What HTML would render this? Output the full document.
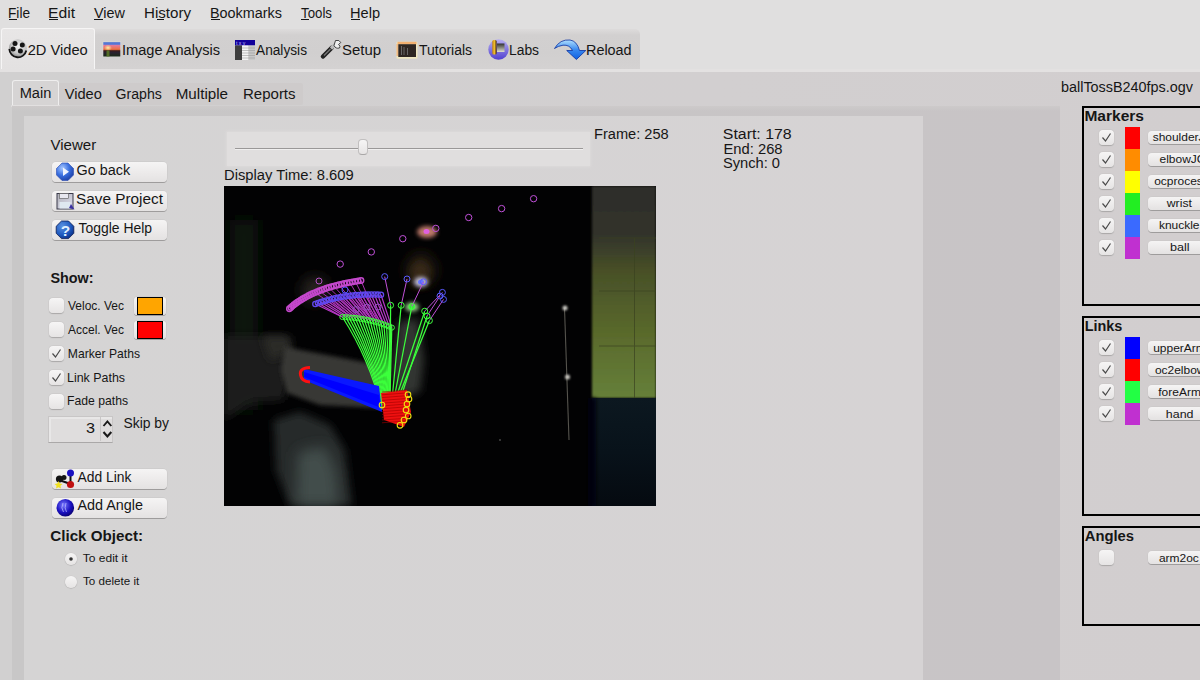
<!DOCTYPE html>
<html><head><meta charset="utf-8">
<style>
html,body{margin:0;padding:0;}
body{width:1200px;height:680px;overflow:hidden;position:relative;background:#d4d1d1;font-family:"Liberation Sans",sans-serif;}
.a{position:absolute;box-sizing:border-box;}
svg{position:absolute;left:0;top:0;}
svg text{font-family:"Liberation Sans",sans-serif;white-space:pre;}
</style></head><body>
<!-- menubar + toolbar background -->
<div class="a" style="left:0;top:0;width:1200px;height:72px;background:#e0dfdf"></div>
<div class="a" style="left:0;top:69px;width:1200px;height:3px;background:#e3e1e1"></div>
<!-- toolbar band -->
<div class="a" style="left:95px;top:29px;width:545px;height:40px;background:linear-gradient(#dddbdb,#d2d0d0 6px,#d1cfcf 60%,#d4d2d2);border-radius:0 5px 0 0"></div>
<!-- active tab -->
<div class="a" style="left:1px;top:28px;width:94px;height:41px;background:linear-gradient(#e8e6e6,#e3e1e1);border:1px solid #f6f5f5;border-bottom:none;border-radius:3px 3px 0 0"></div>
<!-- lower bg -->
<div class="a" style="left:0;top:72px;width:1200px;height:608px;background:linear-gradient(90deg,#d1d0d0,#d2cfd0 60%,#d2cecf)"></div>
<!-- subtab band -->
<div class="a" style="left:58px;top:83px;width:245px;height:22px;background:#cecbcb;border-radius:2px"></div>
<!-- Main tab -->
<div class="a" style="left:12px;top:80px;width:47px;height:27px;background:#d6d4d4;border:1px solid #efeeee;border-bottom:none;border-radius:3px 3px 0 0"></div>
<div class="a" style="left:11px;top:105px;width:49px;height:2px;background:#e2e0e0;border-radius:1px"></div>
<!-- tab body -->
<div class="a" style="left:12px;top:106px;width:1048px;height:574px;background:linear-gradient(#cdcaca,rgba(205,202,202,0) 5px),linear-gradient(90deg,#c8c7c7,#c8c5c6 60%,#c8c4c6)"></div>
<!-- content panel -->
<div class="a" style="left:24px;top:116px;width:899px;height:564px;background:linear-gradient(90deg,#d5d4d4,#d6d3d4)"></div>
<!-- slider bg -->
<div class="a" style="left:227px;top:132px;width:363px;height:34px;background:#e0dede;box-shadow:0 0 2px 1px #dcdada"></div>
<div class="a" style="left:235px;top:148px;width:348px;height:1px;background:#9a9898"></div>
<div class="a" style="left:235px;top:149px;width:348px;height:1px;background:#f0efef"></div>
<div class="a" style="left:358px;top:139px;width:10px;height:16px;background:linear-gradient(#f6f5f5,#e6e4e4);border:1px solid #c1bfbf;border-bottom-color:#a9a7a7;border-radius:4px"></div>
<!-- video -->
<div class="a" style="left:224px;top:186px;width:432px;height:320px;background:#020203;overflow:hidden">
</div>
<!-- group boxes -->
<div class="a" style="left:1082px;top:106px;width:130px;height:200px;border:2px solid #000"></div>
<div class="a" style="left:1082px;top:316px;width:130px;height:200px;border:2px solid #000"></div>
<div class="a" style="left:1082px;top:526px;width:130px;height:100px;border:2px solid #000"></div>
<!-- mnemonic underlines -->
<div class="a" style="left:9px;top:19px;width:8px;height:1px;background:#161616"></div>
<div class="a" style="left:49px;top:19px;width:9px;height:1px;background:#161616"></div>
<div class="a" style="left:94px;top:19px;width:9px;height:1px;background:#161616"></div>
<div class="a" style="left:157px;top:19px;width:7px;height:1px;background:#161616"></div>
<div class="a" style="left:211px;top:19px;width:9px;height:1px;background:#161616"></div>
<div class="a" style="left:301px;top:19px;width:8px;height:1px;background:#161616"></div>
<div class="a" style="left:351px;top:19px;width:9px;height:1px;background:#161616"></div>
<svg width="1200" height="680" style="z-index:10">
<defs>
<radialGradient id="reelg" cx="0.55" cy="0.4" r="0.7"><stop offset="0" stop-color="#f4f4f4"/><stop offset="0.6" stop-color="#c4c4c4"/><stop offset="1" stop-color="#6a6a6a"/></radialGradient>
<linearGradient id="sky" x1="0" y1="0" x2="0" y2="1"><stop offset="0" stop-color="#4a6fd0"/><stop offset="0.15" stop-color="#5a7ad8"/><stop offset="0.22" stop-color="#e27a9a"/><stop offset="0.5" stop-color="#f07040"/><stop offset="0.6" stop-color="#3a1a18"/><stop offset="0.7" stop-color="#2a2030"/><stop offset="1" stop-color="#1a2a18"/></linearGradient>
<radialGradient id="sun" cx="0.5" cy="0.5" r="0.5"><stop offset="0" stop-color="#fff0a0"/><stop offset="1" stop-color="#fff0a0" stop-opacity="0"/></radialGradient>
<linearGradient id="labg" x1="0" y1="0" x2="0" y2="1"><stop offset="0" stop-color="#b8b0f0"/><stop offset="1" stop-color="#5040d0"/></linearGradient>
<linearGradient id="gold" x1="0" y1="0" x2="1" y2="0"><stop offset="0" stop-color="#c08010"/><stop offset="0.5" stop-color="#f0c030"/><stop offset="1" stop-color="#402000"/></linearGradient>
<linearGradient id="arrowg" x1="0" y1="0" x2="0" y2="1"><stop offset="0" stop-color="#b0e0ff"/><stop offset="0.5" stop-color="#3a8af0"/><stop offset="1" stop-color="#1060e0"/></linearGradient>
</defs>
<!-- reel -->
<circle cx="17.8" cy="48.2" r="8.9" fill="url(#reelg)"/>
<path d="M9.3 49 A8.6 8.6 0 0 0 26.3 50.5" fill="none" stroke="#151515" stroke-width="1.8"/>
<circle cx="15" cy="43.4" r="2.5" fill="#151515"/><circle cx="22.3" cy="45" r="2.5" fill="#151515"/>
<circle cx="13.1" cy="49.1" r="2.5" fill="#151515"/><circle cx="20.4" cy="51" r="2.5" fill="#151515"/>
<!-- image -->
<rect x="102.5" y="41.5" width="18.5" height="15.5" fill="#d8d8d8"/>
<rect x="103.3" y="42.2" width="17" height="14.3" fill="url(#sky)"/>
<ellipse cx="108" cy="47.8" rx="4" ry="3" fill="url(#sun)"/>
<rect x="106.5" y="50.5" width="3" height="6" fill="#5a7a28" opacity="0.85"/>
<!-- analysis -->
<rect x="235" y="40" width="20" height="5.5" fill="#12009a"/>
<text x="236" y="45" font-size="5" fill="#c8c0ff" font-family="Liberation Sans">t&#160;x&#160;y</text>
<rect x="235" y="45.5" width="7" height="14.5" fill="#3e3e3e"/>
<rect x="242" y="45.5" width="6.5" height="14.5" fill="#f4f4f4"/>
<rect x="248.5" y="45.5" width="6.5" height="14.5" fill="#c8c8c8"/>
<path d="M242 48h13M242 50.5h13M242 53h13M242 55.5h13M242 58h13" stroke="#9a9a9a" stroke-width="0.6"/>
<!-- setup -->
<path d="M323 56.5 L331.5 48" stroke="#222" stroke-width="4.5" stroke-linecap="round"/>
<path d="M324 55.5 L330.5 49" stroke="#777" stroke-width="1.2"/>
<path d="M331 48.5 L337.5 42" stroke="#bbb" stroke-width="3.2"/>
<path d="M335.5 40.5 Q339.5 39.5 340.8 42.5 L338.5 44.5 Q341 46 339.5 48 Q335.5 49 334 45.5Z" fill="#eee" stroke="#333" stroke-width="0.9"/>
<!-- tutorials -->
<rect x="396.5" y="41.8" width="21" height="17" rx="1" fill="#efe6c0"/>
<rect x="397.5" y="41.8" width="19" height="2.4" fill="#f2b070"/>
<rect x="396.5" y="44" width="1.8" height="12" fill="#f0b880"/>
<rect x="398.3" y="44.2" width="17.7" height="12.8" fill="#2e2622"/>
<path d="M401.5 46v9M404 47v8M407.5 48v7" stroke="#777" stroke-width="0.8"/>
<!-- labs -->
<circle cx="498.5" cy="49.5" r="10.2" fill="url(#labg)"/>
<linearGradient id="labsq" x1="0" y1="0" x2="0" y2="1"><stop offset="0" stop-color="#303030"/><stop offset="1" stop-color="#e0e0d0"/></linearGradient><rect x="497" y="43.5" width="7.5" height="8.5" fill="url(#labsq)"/>
<rect x="492.3" y="40" width="4.3" height="14.5" rx="1.5" fill="url(#gold)"/>
<!-- reload -->
<path d="M554.5 48.5 Q560 39 570 40 Q577 41 579.5 50.5 L585.8 50.5 L576.4 59.5 L566.7 50.5 L572.5 50.5 Q569.5 44.5 563 45.2 Q558 46 554.5 48.5Z" fill="url(#arrowg)" stroke="#0a30a0" stroke-width="0.8"/>
</svg>
<style>
.btn{position:absolute;box-sizing:border-box;border-radius:4px;background:linear-gradient(#f5f4f4,#ebe9e9 60%,#e4e2e2);box-shadow:0 1px 0 #9e9c9c, 0 0 0 0.5px #c8c6c6;}
.cb{position:absolute;box-sizing:border-box;width:15px;height:15px;border-radius:4px;background:linear-gradient(#f6f5f5,#e6e4e4);box-shadow:0 0.5px 1px #a9a7a7, 0 0 0 0.5px #cfcdcd;}
.rb{position:absolute;box-sizing:border-box;width:12px;height:12px;border-radius:50%;background:linear-gradient(#f6f5f5,#e6e4e4);box-shadow:0 0.5px 1px #a9a7a7, 0 0 0 0.5px #cfcdcd;}
</style>
<div class="btn" style="left:52px;top:162px;width:115px;height:20px"></div>
<div class="btn" style="left:52px;top:191px;width:115px;height:20px"></div>
<div class="btn" style="left:52px;top:220px;width:115px;height:20px"></div>
<div class="btn" style="left:52px;top:469px;width:115px;height:20px"></div>
<div class="btn" style="left:52px;top:498px;width:115px;height:20px"></div>
<!-- checkboxes left -->
<div class="cb" style="left:49px;top:298px"></div>
<div class="cb" style="left:49px;top:322px"></div>
<div class="cb" style="left:49px;top:346px"></div>
<div class="cb" style="left:49px;top:370px"></div>
<div class="cb" style="left:49px;top:394px"></div>
<!-- color buttons -->
<div class="btn" style="left:134px;top:297px;width:32px;height:18px;border-radius:3px"></div>
<div class="a" style="left:137px;top:297px;width:26px;height:18px;background:#ffa500;border:1.5px solid #000"></div>
<div class="btn" style="left:134px;top:321px;width:32px;height:18px;border-radius:3px"></div>
<div class="a" style="left:137px;top:321px;width:26px;height:18px;background:#ff0000;border:1.5px solid #000"></div>
<!-- spinbox -->
<div class="a" style="left:48px;top:416px;width:65px;height:27px;background:#dfdddd;border:1px solid #c8c6c6;border-bottom-color:#aaa8a8;box-shadow:inset 2px 2px 0 #e8e7e7"></div>
<div class="a" style="left:100px;top:417px;width:1px;height:24px;background:#c8c6c6"></div>
<!-- radios -->
<div class="rb" style="left:65px;top:553px"></div>
<div class="rb" style="left:65px;top:576px"></div>
<svg width="1200" height="680" style="z-index:12">
<defs>
<radialGradient id="bluebtn" cx="0.35" cy="0.3" r="0.8"><stop offset="0" stop-color="#a8c8ff"/><stop offset="0.5" stop-color="#3a70e0"/><stop offset="1" stop-color="#1a3aa0"/></radialGradient>
<radialGradient id="helpg" cx="0.35" cy="0.3" r="0.8"><stop offset="0" stop-color="#5a90e0"/><stop offset="0.6" stop-color="#1e5ac0"/><stop offset="1" stop-color="#0a2a80"/></radialGradient>
<radialGradient id="angg" cx="0.4" cy="0.35" r="0.7"><stop offset="0" stop-color="#7a7aff"/><stop offset="0.6" stop-color="#1a10c0"/><stop offset="1" stop-color="#08006a"/></radialGradient>
<linearGradient id="flop" x1="0" y1="0" x2="1" y2="1"><stop offset="0" stop-color="#b0b0b8"/><stop offset="1" stop-color="#e0e0f0"/></linearGradient>
</defs>
<!-- go back -->
<path d="M62 163 L68 163 L73.5 168.5 L73.5 175 L68 180.5 L62 180.5 L56.5 175 L56.5 168.5Z" fill="url(#bluebtn)" stroke="#2a4ab0" stroke-width="0.6"/>
<path d="M63 167.5 L69 171.8 L63 176Z" fill="#f0f4ff"/>
<!-- save -->
<rect x="57" y="193.5" width="16" height="15.5" fill="url(#flop)" stroke="#3a3a4a" stroke-width="1"/>
<rect x="59.5" y="193.5" width="9" height="5" fill="#e8e8f0" stroke="#555" stroke-width="0.6"/>
<rect x="59.5" y="202" width="11" height="6.5" fill="#dfe8f0"/>
<path d="M71 204 L74.5 209.5 L69 208Z" fill="#3a30a0"/>
<!-- help -->
<path d="M61.5 221 L68.5 221 L73.8 226.3 L73.8 233.3 L68.5 238.6 L61.5 238.6 L56.2 233.3 L56.2 226.3Z" fill="url(#helpg)" stroke="#0a1a50" stroke-width="0.8"/>
<text x="60.8" y="235.8" font-size="15.5" font-weight="bold" fill="#e0f0ff" font-family="Liberation Sans">?</text>
<!-- add link -->
<path d="M70.5 474 L70.5 484" stroke="#111" stroke-width="2"/>
<path d="M62 481 L70.5 484" stroke="#111" stroke-width="2"/>
<circle cx="59.5" cy="479" r="3.6" fill="#141414"/>
<circle cx="64" cy="477.5" r="2.5" fill="#141414"/>
<path d="M58.5 481 l1.2 2.6 2.8 0.3 -2.1 1.9 0.6 2.8 -2.5 -1.4 -2.5 1.4 0.6 -2.8 -2.1 -1.9 2.8 -0.3z" fill="#f0e020"/>
<circle cx="70.5" cy="473" r="3.5" fill="#1a10c0"/>
<circle cx="70.5" cy="484.5" r="3.6" fill="#c01010"/>
<!-- add angle -->
<circle cx="65.3" cy="507.8" r="8.8" fill="url(#angg)"/>
<path d="M63 503 Q60.5 508 63.5 512 M66 503 Q64 508 66.5 512" stroke="#c0c0ff" stroke-width="0.7" fill="none"/>
<!-- checkmarks -->
<path d="M52.5 353.5 L55.5 357 L60.5 349.5" stroke="#4a4a4a" stroke-width="1.2" fill="none"/>
<path d="M52.5 377.5 L55.5 381 L60.5 373.5" stroke="#4a4a4a" stroke-width="1.2" fill="none"/>
<!-- radio dot -->
<circle cx="71" cy="559" r="1.8" fill="#333"/>
<!-- spin arrows -->
<path d="M103.5 426 L107.4 421.5 L111.3 426" stroke="#1a1a1a" stroke-width="1.9" fill="none"/>
<path d="M103.5 432 L107.4 436.5 L111.3 432" stroke="#1a1a1a" stroke-width="2.1" fill="none"/>
</svg>
<svg width="1200" height="680" style="z-index:20">
<defs>
<clipPath id="vclip"><rect x="224" y="186" width="432" height="320"/></clipPath>
<filter id="bl2" filterUnits="userSpaceOnUse" x="0" y="0" width="1200" height="680"><feGaussianBlur stdDeviation="2"/></filter>
<filter id="bl4" filterUnits="userSpaceOnUse" x="0" y="0" width="1200" height="680"><feGaussianBlur stdDeviation="4"/></filter>
<filter id="bl6" filterUnits="userSpaceOnUse" x="0" y="0" width="1200" height="680"><feGaussianBlur stdDeviation="7"/></filter>
<filter id="bl1" filterUnits="userSpaceOnUse" x="0" y="0" width="1200" height="680"><feGaussianBlur stdDeviation="0.8"/></filter>
<linearGradient id="wallg" x1="0" y1="0" x2="0" y2="1"><stop offset="0" stop-color="#2e2d2a"/><stop offset="0.22" stop-color="#31322a"/><stop offset="0.4" stop-color="#485028"/><stop offset="0.7" stop-color="#5a6a2c"/><stop offset="1" stop-color="#66803a"/></linearGradient>
<linearGradient id="navyg" x1="0" y1="0" x2="0" y2="1"><stop offset="0" stop-color="#0c1820"/><stop offset="0.5" stop-color="#08121a"/><stop offset="1" stop-color="#050a10"/></linearGradient>
</defs>
<g clip-path="url(#vclip)">
<rect x="224" y="186" width="432" height="320" fill="#020203"/>
<rect x="230" y="220" width="28" height="190" fill="#10120c" filter="url(#bl6)"/>
<path d="M224 336 L286 336 L292 360 L284 400 L250 402 L224 420Z" fill="#1c1e1a" filter="url(#bl4)"/>
<path d="M262 336 L290 336 L292 352 L270 360Z" fill="#2a2b27" filter="url(#bl4)"/>
<path d="M285 347 L374 364 L384 383 L379 408 L320 405 L287 393 L281 370Z" fill="#383835" filter="url(#bl2)"/>
<path d="M274 420 L300 412 L330 425 L345 450 L352 506 L290 506 L276 470Z" fill="#252c2a" filter="url(#bl4)"/>
<path d="M298 452 L325 446 L336 470 L340 506 L296 506Z" fill="#434e4b" filter="url(#bl6)"/>
<ellipse cx="315" cy="290" rx="13" ry="13" fill="#2a2520" filter="url(#bl6)"/>
<ellipse cx="421" cy="270" rx="14" ry="16" fill="#2a2218" filter="url(#bl6)"/>
<path d="M398 322 L418 318 L424 360 L420 392 L398 398 L392 370Z" fill="#333431" filter="url(#bl4)"/>
<rect x="592" y="186" width="64" height="212" fill="url(#wallg)" filter="url(#bl1)"/>
<path d="M599 238 H656 M599 291 H656 M599 346 H656 M634.5 238 V398" stroke="#3a4220" stroke-width="1" opacity="0.7"/>
<rect x="592" y="398" width="64" height="108" fill="url(#navyg)"/>
<rect x="588" y="398" width="8" height="108" fill="#040608" filter="url(#bl2)"/>
<path d="M564.5 308 L569 440" stroke="#6a6860" stroke-width="1.1" opacity="0.8"/>
<circle cx="565" cy="308" r="2.5" fill="#c8c6c0" filter="url(#bl1)"/>
<circle cx="567.5" cy="377" r="2.5" fill="#c8c6c0" filter="url(#bl1)"/>
<circle cx="500" cy="440" r="1" fill="#444"/>
<ellipse cx="427" cy="232" rx="10" ry="6" fill="#c88070" filter="url(#bl2)" opacity="0.95"/>
<ellipse cx="420" cy="274" rx="9" ry="12" fill="#3a2a18" filter="url(#bl4)" opacity="0.9"/>
<ellipse cx="421" cy="282" rx="7" ry="5" fill="#d0d0f0" filter="url(#bl2)" opacity="0.9"/>
<ellipse cx="412" cy="307" rx="7" ry="4.5" fill="#b0f0a0" filter="url(#bl2)" opacity="0.85"/>
<ellipse cx="421" cy="282" rx="3" ry="2.5" fill="#6a7aff"/>
<ellipse cx="412" cy="307" rx="3" ry="2.5" fill="#40e040"/>
<circle cx="340.2" cy="264.1" r="3.2" fill="none" stroke="#c050d8" stroke-width="1"/>
<circle cx="371.3" cy="251.9" r="3.2" fill="none" stroke="#c050d8" stroke-width="1"/>
<circle cx="402.8" cy="238.7" r="3.2" fill="none" stroke="#c050d8" stroke-width="1"/>
<circle cx="435.8" cy="228.4" r="3.2" fill="none" stroke="#c050d8" stroke-width="1"/>
<circle cx="468.7" cy="217.5" r="3.2" fill="none" stroke="#c050d8" stroke-width="1"/>
<circle cx="501.6" cy="208.6" r="3.2" fill="none" stroke="#c050d8" stroke-width="1"/>
<circle cx="533.6" cy="198.7" r="3.2" fill="none" stroke="#c050d8" stroke-width="1"/>
<ellipse cx="426.5" cy="231.5" rx="3" ry="2.5" fill="#e060e0"/>
<line x1="315.3" y1="304.0" x2="342.4" y2="317.0" stroke="#b838c8" stroke-width="1.2"/>
<line x1="318.0" y1="303.0" x2="342.4" y2="317.0" stroke="#b838c8" stroke-width="1.2"/>
<line x1="320.8" y1="302.1" x2="345.6" y2="317.1" stroke="#b838c8" stroke-width="1.2"/>
<line x1="323.5" y1="301.2" x2="348.8" y2="317.4" stroke="#b838c8" stroke-width="1.2"/>
<line x1="326.3" y1="300.4" x2="352.0" y2="317.6" stroke="#b838c8" stroke-width="1.2"/>
<line x1="329.1" y1="299.7" x2="352.0" y2="317.6" stroke="#b838c8" stroke-width="1.2"/>
<line x1="332.0" y1="298.9" x2="355.1" y2="317.9" stroke="#b838c8" stroke-width="1.2"/>
<line x1="334.8" y1="298.3" x2="358.1" y2="318.3" stroke="#b838c8" stroke-width="1.2"/>
<line x1="337.7" y1="297.7" x2="361.2" y2="318.8" stroke="#b838c8" stroke-width="1.2"/>
<line x1="340.7" y1="297.1" x2="364.1" y2="319.3" stroke="#b838c8" stroke-width="1.2"/>
<line x1="343.6" y1="296.6" x2="364.1" y2="319.3" stroke="#b838c8" stroke-width="1.2"/>
<line x1="346.6" y1="296.2" x2="367.1" y2="319.8" stroke="#b838c8" stroke-width="1.2"/>
<line x1="349.6" y1="295.8" x2="370.0" y2="320.5" stroke="#b838c8" stroke-width="1.2"/>
<line x1="352.6" y1="295.4" x2="372.9" y2="321.2" stroke="#b838c8" stroke-width="1.2"/>
<line x1="355.7" y1="295.1" x2="372.9" y2="321.2" stroke="#b838c8" stroke-width="1.2"/>
<line x1="358.7" y1="294.9" x2="375.7" y2="321.9" stroke="#b838c8" stroke-width="1.2"/>
<line x1="361.8" y1="294.7" x2="378.5" y2="322.7" stroke="#b838c8" stroke-width="1.2"/>
<line x1="365.0" y1="294.6" x2="381.2" y2="323.6" stroke="#b838c8" stroke-width="1.2"/>
<line x1="368.1" y1="294.5" x2="383.9" y2="324.5" stroke="#b838c8" stroke-width="1.2"/>
<line x1="371.3" y1="294.5" x2="383.9" y2="324.5" stroke="#b838c8" stroke-width="1.2"/>
<line x1="374.5" y1="294.5" x2="386.6" y2="325.5" stroke="#b838c8" stroke-width="1.2"/>
<line x1="377.7" y1="294.6" x2="389.2" y2="326.5" stroke="#b838c8" stroke-width="1.2"/>
<line x1="381.0" y1="294.7" x2="391.8" y2="327.6" stroke="#b838c8" stroke-width="1.2"/>
<line x1="315.0" y1="292.6" x2="352.0" y2="317.6" stroke="#a830b0" stroke-width="1"/>
<line x1="319.4" y1="290.8" x2="355.1" y2="317.9" stroke="#a830b0" stroke-width="1"/>
<line x1="324.0" y1="289.1" x2="358.1" y2="318.3" stroke="#a830b0" stroke-width="1"/>
<line x1="328.8" y1="287.5" x2="361.2" y2="318.8" stroke="#a830b0" stroke-width="1"/>
<line x1="333.8" y1="286.1" x2="364.1" y2="319.3" stroke="#a830b0" stroke-width="1"/>
<line x1="338.9" y1="284.7" x2="367.1" y2="319.8" stroke="#a830b0" stroke-width="1"/>
<line x1="344.2" y1="283.5" x2="370.0" y2="320.5" stroke="#a830b0" stroke-width="1"/>
<line x1="349.7" y1="282.4" x2="372.9" y2="321.2" stroke="#a830b0" stroke-width="1"/>
<line x1="355.3" y1="281.4" x2="375.7" y2="321.9" stroke="#a830b0" stroke-width="1"/>
<line x1="361.0" y1="280.5" x2="378.5" y2="322.7" stroke="#a830b0" stroke-width="1"/>
<line x1="384.7" y1="276.6" x2="390.6" y2="305.3" stroke="#c050d8" stroke-width="1"/>
<line x1="407" y1="279" x2="401.2" y2="305.3" stroke="#c050d8" stroke-width="1"/>
<line x1="423.5" y1="281.8" x2="411.8" y2="306.5" stroke="#c050d8" stroke-width="1"/>
<line x1="442.4" y1="292.4" x2="424.7" y2="311.2" stroke="#c050d8" stroke-width="1"/>
<line x1="443.5" y1="299.4" x2="429.4" y2="320.6" stroke="#c050d8" stroke-width="1"/>
<line x1="440" y1="296" x2="427" y2="316" stroke="#c050d8" stroke-width="1"/>
<path d="M342.4 317.0 Q369.2 358.5 382.0 410.0" stroke="#3cff3c" stroke-width="1.25" fill="none"/>
<path d="M345.6 317.1 Q370.6 358.5 382.5 409.2" stroke="#3cff3c" stroke-width="1.25" fill="none"/>
<path d="M348.8 317.4 Q372.1 358.4 382.9 408.4" stroke="#3cff3c" stroke-width="1.25" fill="none"/>
<path d="M352.0 317.6 Q373.5 358.5 383.4 407.5" stroke="#3cff3c" stroke-width="1.25" fill="none"/>
<path d="M355.1 317.9 Q374.8 358.5 383.9 406.7" stroke="#3cff3c" stroke-width="1.25" fill="none"/>
<path d="M358.1 318.3 Q376.2 358.6 384.4 405.9" stroke="#3cff3c" stroke-width="1.25" fill="none"/>
<path d="M361.2 318.8 Q377.5 358.7 384.8 405.1" stroke="#3cff3c" stroke-width="1.25" fill="none"/>
<path d="M364.1 319.3 Q378.8 358.8 385.3 404.2" stroke="#3cff3c" stroke-width="1.25" fill="none"/>
<path d="M367.1 319.8 Q380.1 359.0 385.8 403.4" stroke="#3cff3c" stroke-width="1.25" fill="none"/>
<path d="M370.0 320.5 Q381.4 359.2 386.2 402.6" stroke="#3cff3c" stroke-width="1.25" fill="none"/>
<path d="M372.9 321.2 Q382.7 359.4 386.7 401.8" stroke="#3cff3c" stroke-width="1.25" fill="none"/>
<path d="M375.7 321.9 Q383.9 359.7 387.2 400.9" stroke="#3cff3c" stroke-width="1.25" fill="none"/>
<path d="M378.5 322.7 Q385.1 359.9 387.6 400.1" stroke="#3cff3c" stroke-width="1.25" fill="none"/>
<path d="M381.2 323.6 Q386.3 360.2 388.1 399.3" stroke="#3cff3c" stroke-width="1.25" fill="none"/>
<path d="M383.9 324.5 Q387.5 360.6 388.6 398.5" stroke="#3cff3c" stroke-width="1.25" fill="none"/>
<path d="M386.6 325.5 Q388.6 361.0 389.1 397.6" stroke="#3cff3c" stroke-width="1.25" fill="none"/>
<path d="M389.2 326.5 Q389.8 361.4 389.5 396.8" stroke="#3cff3c" stroke-width="1.25" fill="none"/>
<path d="M391.8 327.6 Q390.9 361.8 390.0 396.0" stroke="#3cff3c" stroke-width="1.25" fill="none"/>
<line x1="390.6" y1="305.3" x2="390.0" y2="395.0" stroke="#3cff3c" stroke-width="1.25"/>
<line x1="401.2" y1="305.3" x2="392.5" y2="394.5" stroke="#3cff3c" stroke-width="1.25"/>
<line x1="411.8" y1="306.5" x2="395.0" y2="394.0" stroke="#3cff3c" stroke-width="1.25"/>
<line x1="424.7" y1="311.2" x2="397.5" y2="393.5" stroke="#3cff3c" stroke-width="1.25"/>
<line x1="429.4" y1="320.6" x2="400.0" y2="393.0" stroke="#3cff3c" stroke-width="1.25"/>
<line x1="427.0" y1="316.0" x2="402.5" y2="392.5" stroke="#3cff3c" stroke-width="1.25"/>
<circle cx="289.4" cy="308.8" r="2.7" fill="none" stroke="#c448cc" stroke-width="1.5"/>
<circle cx="290.9" cy="307.4" r="2.7" fill="none" stroke="#c448cc" stroke-width="1.5"/>
<circle cx="292.4" cy="306.1" r="2.7" fill="none" stroke="#c448cc" stroke-width="1.5"/>
<circle cx="294.0" cy="304.8" r="2.7" fill="none" stroke="#c448cc" stroke-width="1.5"/>
<circle cx="295.7" cy="303.5" r="2.7" fill="none" stroke="#c448cc" stroke-width="1.5"/>
<circle cx="297.4" cy="302.3" r="2.7" fill="none" stroke="#c448cc" stroke-width="1.5"/>
<circle cx="299.1" cy="301.1" r="2.7" fill="none" stroke="#c448cc" stroke-width="1.5"/>
<circle cx="301.0" cy="299.9" r="2.7" fill="none" stroke="#c448cc" stroke-width="1.5"/>
<circle cx="302.8" cy="298.8" r="2.7" fill="none" stroke="#c448cc" stroke-width="1.5"/>
<circle cx="304.7" cy="297.7" r="2.7" fill="none" stroke="#c448cc" stroke-width="1.5"/>
<circle cx="306.7" cy="296.6" r="2.7" fill="none" stroke="#c448cc" stroke-width="1.5"/>
<circle cx="308.7" cy="295.5" r="2.7" fill="none" stroke="#c448cc" stroke-width="1.5"/>
<circle cx="310.7" cy="294.5" r="2.7" fill="none" stroke="#c448cc" stroke-width="1.5"/>
<circle cx="312.8" cy="293.5" r="2.7" fill="none" stroke="#c448cc" stroke-width="1.5"/>
<circle cx="315.0" cy="292.6" r="2.7" fill="none" stroke="#c448cc" stroke-width="1.5"/>
<circle cx="317.2" cy="291.7" r="2.7" fill="none" stroke="#c448cc" stroke-width="1.5"/>
<circle cx="319.4" cy="290.8" r="2.7" fill="none" stroke="#c448cc" stroke-width="1.5"/>
<circle cx="321.7" cy="289.9" r="2.7" fill="none" stroke="#c448cc" stroke-width="1.5"/>
<circle cx="324.0" cy="289.1" r="2.7" fill="none" stroke="#c448cc" stroke-width="1.5"/>
<circle cx="326.4" cy="288.3" r="2.7" fill="none" stroke="#c448cc" stroke-width="1.5"/>
<circle cx="328.8" cy="287.5" r="2.7" fill="none" stroke="#c448cc" stroke-width="1.5"/>
<circle cx="331.3" cy="286.8" r="2.7" fill="none" stroke="#c448cc" stroke-width="1.5"/>
<circle cx="333.8" cy="286.1" r="2.7" fill="none" stroke="#c448cc" stroke-width="1.5"/>
<circle cx="336.3" cy="285.4" r="2.7" fill="none" stroke="#c448cc" stroke-width="1.5"/>
<circle cx="338.9" cy="284.7" r="2.7" fill="none" stroke="#c448cc" stroke-width="1.5"/>
<circle cx="341.6" cy="284.1" r="2.7" fill="none" stroke="#c448cc" stroke-width="1.5"/>
<circle cx="344.2" cy="283.5" r="2.7" fill="none" stroke="#c448cc" stroke-width="1.5"/>
<circle cx="346.9" cy="282.9" r="2.7" fill="none" stroke="#c448cc" stroke-width="1.5"/>
<circle cx="349.7" cy="282.4" r="2.7" fill="none" stroke="#c448cc" stroke-width="1.5"/>
<circle cx="352.4" cy="281.9" r="2.7" fill="none" stroke="#c448cc" stroke-width="1.5"/>
<circle cx="355.3" cy="281.4" r="2.7" fill="none" stroke="#c448cc" stroke-width="1.5"/>
<circle cx="358.1" cy="280.9" r="2.7" fill="none" stroke="#c448cc" stroke-width="1.5"/>
<circle cx="361.0" cy="280.5" r="2.7" fill="none" stroke="#c448cc" stroke-width="1.5"/>
<circle cx="315.3" cy="304.0" r="2.6" fill="none" stroke="#6048f0" stroke-width="1.3"/>
<circle cx="318.0" cy="303.0" r="2.6" fill="none" stroke="#6048f0" stroke-width="1.3"/>
<circle cx="320.8" cy="302.1" r="2.6" fill="none" stroke="#6048f0" stroke-width="1.3"/>
<circle cx="323.5" cy="301.2" r="2.6" fill="none" stroke="#6048f0" stroke-width="1.3"/>
<circle cx="326.3" cy="300.4" r="2.6" fill="none" stroke="#6048f0" stroke-width="1.3"/>
<circle cx="329.1" cy="299.7" r="2.6" fill="none" stroke="#6048f0" stroke-width="1.3"/>
<circle cx="332.0" cy="298.9" r="2.6" fill="none" stroke="#6048f0" stroke-width="1.3"/>
<circle cx="334.8" cy="298.3" r="2.6" fill="none" stroke="#6048f0" stroke-width="1.3"/>
<circle cx="337.7" cy="297.7" r="2.6" fill="none" stroke="#6048f0" stroke-width="1.3"/>
<circle cx="340.7" cy="297.1" r="2.6" fill="none" stroke="#6048f0" stroke-width="1.3"/>
<circle cx="343.6" cy="296.6" r="2.6" fill="none" stroke="#6048f0" stroke-width="1.3"/>
<circle cx="346.6" cy="296.2" r="2.6" fill="none" stroke="#6048f0" stroke-width="1.3"/>
<circle cx="349.6" cy="295.8" r="2.6" fill="none" stroke="#6048f0" stroke-width="1.3"/>
<circle cx="352.6" cy="295.4" r="2.6" fill="none" stroke="#6048f0" stroke-width="1.3"/>
<circle cx="355.7" cy="295.1" r="2.6" fill="none" stroke="#6048f0" stroke-width="1.3"/>
<circle cx="358.7" cy="294.9" r="2.6" fill="none" stroke="#6048f0" stroke-width="1.3"/>
<circle cx="361.8" cy="294.7" r="2.6" fill="none" stroke="#6048f0" stroke-width="1.3"/>
<circle cx="365.0" cy="294.6" r="2.6" fill="none" stroke="#6048f0" stroke-width="1.3"/>
<circle cx="368.1" cy="294.5" r="2.6" fill="none" stroke="#6048f0" stroke-width="1.3"/>
<circle cx="371.3" cy="294.5" r="2.6" fill="none" stroke="#6048f0" stroke-width="1.3"/>
<circle cx="374.5" cy="294.5" r="2.6" fill="none" stroke="#6048f0" stroke-width="1.3"/>
<circle cx="377.7" cy="294.6" r="2.6" fill="none" stroke="#6048f0" stroke-width="1.3"/>
<circle cx="381.0" cy="294.7" r="2.6" fill="none" stroke="#6048f0" stroke-width="1.3"/>
<circle cx="342.4" cy="317.0" r="2.6" fill="none" stroke="#40ff40" stroke-width="1"/>
<circle cx="345.6" cy="317.1" r="2.6" fill="none" stroke="#40ff40" stroke-width="1"/>
<circle cx="348.8" cy="317.4" r="2.6" fill="none" stroke="#40ff40" stroke-width="1"/>
<circle cx="352.0" cy="317.6" r="2.6" fill="none" stroke="#40ff40" stroke-width="1"/>
<circle cx="355.1" cy="317.9" r="2.6" fill="none" stroke="#40ff40" stroke-width="1"/>
<circle cx="358.1" cy="318.3" r="2.6" fill="none" stroke="#40ff40" stroke-width="1"/>
<circle cx="361.2" cy="318.8" r="2.6" fill="none" stroke="#40ff40" stroke-width="1"/>
<circle cx="364.1" cy="319.3" r="2.6" fill="none" stroke="#40ff40" stroke-width="1"/>
<circle cx="367.1" cy="319.8" r="2.6" fill="none" stroke="#40ff40" stroke-width="1"/>
<circle cx="370.0" cy="320.5" r="2.6" fill="none" stroke="#40ff40" stroke-width="1"/>
<circle cx="372.9" cy="321.2" r="2.6" fill="none" stroke="#40ff40" stroke-width="1"/>
<circle cx="375.7" cy="321.9" r="2.6" fill="none" stroke="#40ff40" stroke-width="1"/>
<circle cx="378.5" cy="322.7" r="2.6" fill="none" stroke="#40ff40" stroke-width="1"/>
<circle cx="381.2" cy="323.6" r="2.6" fill="none" stroke="#40ff40" stroke-width="1"/>
<circle cx="383.9" cy="324.5" r="2.6" fill="none" stroke="#40ff40" stroke-width="1"/>
<circle cx="386.6" cy="325.5" r="2.6" fill="none" stroke="#40ff40" stroke-width="1"/>
<circle cx="389.2" cy="326.5" r="2.6" fill="none" stroke="#40ff40" stroke-width="1"/>
<circle cx="391.8" cy="327.6" r="2.6" fill="none" stroke="#40ff40" stroke-width="1"/>
<circle cx="384.7" cy="276.6" r="3" fill="none" stroke="#5a5aff" stroke-width="1"/>
<circle cx="407.0" cy="279.0" r="3" fill="none" stroke="#5a5aff" stroke-width="1"/>
<circle cx="423.5" cy="281.8" r="3" fill="none" stroke="#5a5aff" stroke-width="1"/>
<circle cx="442.4" cy="292.4" r="3" fill="none" stroke="#5a5aff" stroke-width="1"/>
<circle cx="443.5" cy="299.4" r="3" fill="none" stroke="#5a5aff" stroke-width="1"/>
<circle cx="440.0" cy="296.0" r="3" fill="none" stroke="#5a5aff" stroke-width="1"/>
<circle cx="390.6" cy="305.3" r="3" fill="none" stroke="#40ff40" stroke-width="1"/>
<circle cx="401.2" cy="305.3" r="3" fill="none" stroke="#40ff40" stroke-width="1"/>
<circle cx="411.8" cy="306.5" r="3" fill="none" stroke="#40ff40" stroke-width="1"/>
<circle cx="424.7" cy="311.2" r="3" fill="none" stroke="#40ff40" stroke-width="1"/>
<circle cx="429.4" cy="320.6" r="3" fill="none" stroke="#40ff40" stroke-width="1"/>
<circle cx="427.0" cy="316.0" r="3" fill="none" stroke="#40ff40" stroke-width="1"/>
<circle cx="319.0" cy="281.0" r="3" fill="none" stroke="#b050c0" stroke-width="1"/>
<circle cx="345.0" cy="290.0" r="3" fill="none" stroke="#5050ff" stroke-width="1"/>
<circle cx="356.0" cy="309.5" r="3" fill="none" stroke="#9050c0" stroke-width="1"/>
<circle cx="367.0" cy="307.0" r="3" fill="none" stroke="#9050c0" stroke-width="1"/>
<circle cx="378.0" cy="307.0" r="3" fill="none" stroke="#9050c0" stroke-width="1"/>
<path d="M304 369 L379 386 L382 412 L304 380Z" fill="#0a18ff"/>
<path d="M304 372 L379 395 L381 408 L304 377Z" fill="#0000ff"/>
<path d="M310 367.5 Q299 368 300.5 375 Q301.5 381.5 310 382" stroke="#ff1010" stroke-width="3" fill="none"/>
<path d="M381 393 L407 390 L411 412 L404 427 L384 420Z" fill="#ee1010"/>
<line x1="382" y1="392.0" x2="407.0" y2="390.0" stroke="#a00000" stroke-width="0.6"/>
<line x1="382" y1="394.8" x2="408.2" y2="392.8" stroke="#a00000" stroke-width="0.6"/>
<line x1="382" y1="397.6" x2="407.5" y2="395.6" stroke="#a00000" stroke-width="0.6"/>
<line x1="382" y1="400.4" x2="408.4" y2="398.4" stroke="#a00000" stroke-width="0.6"/>
<line x1="382" y1="403.2" x2="408.5" y2="401.2" stroke="#a00000" stroke-width="0.6"/>
<line x1="382" y1="406.0" x2="406.3" y2="404.0" stroke="#a00000" stroke-width="0.6"/>
<line x1="382" y1="408.8" x2="406.1" y2="406.8" stroke="#a00000" stroke-width="0.6"/>
<line x1="382" y1="411.6" x2="409.3" y2="409.6" stroke="#a00000" stroke-width="0.6"/>
<line x1="382" y1="414.4" x2="407.0" y2="412.4" stroke="#a00000" stroke-width="0.6"/>
<line x1="382" y1="417.2" x2="406.9" y2="415.2" stroke="#a00000" stroke-width="0.6"/>
<line x1="382" y1="420.0" x2="410.0" y2="418.0" stroke="#a00000" stroke-width="0.6"/>
<line x1="382" y1="422.8" x2="407.9" y2="420.8" stroke="#a00000" stroke-width="0.6"/>
<circle cx="408.0" cy="394.7" r="2.8" fill="none" stroke="#f0e010" stroke-width="1.1"/>
<circle cx="409.0" cy="399.0" r="2.8" fill="none" stroke="#f0e010" stroke-width="1.1"/>
<circle cx="407.0" cy="404.0" r="2.8" fill="none" stroke="#f0e010" stroke-width="1.1"/>
<circle cx="408.2" cy="416.0" r="2.8" fill="none" stroke="#f0e010" stroke-width="1.1"/>
<circle cx="404.0" cy="420.0" r="2.8" fill="none" stroke="#f0e010" stroke-width="1.1"/>
<circle cx="400.0" cy="425.3" r="2.8" fill="none" stroke="#f0e010" stroke-width="1.1"/>
<circle cx="406.0" cy="410.0" r="2.8" fill="none" stroke="#f0e010" stroke-width="1.1"/>
<circle cx="382.0" cy="405.0" r="2.8" fill="none" stroke="#f0e010" stroke-width="1.1"/>
</g></svg><div class="a" style="left:1125px;top:127px;width:15px;height:22px;background:#ff0000"></div>
<div class="cb" style="left:1099px;top:130px"></div>
<div class="btn" style="left:1148px;top:131px;width:70px;height:13px;border-radius:4px"></div>
<div class="a" style="left:1125px;top:149px;width:15px;height:22px;background:#ff8c00"></div>
<div class="cb" style="left:1099px;top:152px"></div>
<div class="btn" style="left:1148px;top:153px;width:70px;height:13px;border-radius:4px"></div>
<div class="a" style="left:1125px;top:171px;width:15px;height:22px;background:#ffff00"></div>
<div class="cb" style="left:1099px;top:174px"></div>
<div class="btn" style="left:1148px;top:175px;width:70px;height:13px;border-radius:4px"></div>
<div class="a" style="left:1125px;top:193px;width:15px;height:22px;background:#22ee22"></div>
<div class="cb" style="left:1099px;top:196px"></div>
<div class="btn" style="left:1148px;top:197px;width:70px;height:13px;border-radius:4px"></div>
<div class="a" style="left:1125px;top:215px;width:15px;height:22px;background:#3a6aff"></div>
<div class="cb" style="left:1099px;top:218px"></div>
<div class="btn" style="left:1148px;top:219px;width:70px;height:13px;border-radius:4px"></div>
<div class="a" style="left:1125px;top:237px;width:15px;height:22px;background:#c030d0"></div>
<div class="cb" style="left:1099px;top:240px"></div>
<div class="btn" style="left:1148px;top:241px;width:70px;height:13px;border-radius:4px"></div>
<div class="a" style="left:1125px;top:337px;width:15px;height:22px;background:#0000ff"></div>
<div class="cb" style="left:1099px;top:340px"></div>
<div class="btn" style="left:1148px;top:341px;width:70px;height:13px;border-radius:4px"></div>
<div class="a" style="left:1125px;top:359px;width:15px;height:22px;background:#ff0000"></div>
<div class="cb" style="left:1099px;top:362px"></div>
<div class="btn" style="left:1148px;top:363px;width:70px;height:13px;border-radius:4px"></div>
<div class="a" style="left:1125px;top:381px;width:15px;height:22px;background:#22ff44"></div>
<div class="cb" style="left:1099px;top:384px"></div>
<div class="btn" style="left:1148px;top:385px;width:70px;height:13px;border-radius:4px"></div>
<div class="a" style="left:1125px;top:403px;width:15px;height:22px;background:#c030d0"></div>
<div class="cb" style="left:1099px;top:406px"></div>
<div class="btn" style="left:1148px;top:407px;width:70px;height:13px;border-radius:4px"></div>
<div class="cb" style="left:1099px;top:550px"></div>
<div class="btn" style="left:1148px;top:551px;width:70px;height:13px;border-radius:4px"></div>
<svg width="1200" height="680" style="z-index:14">
<path d="M1102.5 137.5 L1105.5 141 L1110.5 133.5" stroke="#4a4a4a" stroke-width="1.2" fill="none"/>
<path d="M1102.5 159.5 L1105.5 163 L1110.5 155.5" stroke="#4a4a4a" stroke-width="1.2" fill="none"/>
<path d="M1102.5 181.5 L1105.5 185 L1110.5 177.5" stroke="#4a4a4a" stroke-width="1.2" fill="none"/>
<path d="M1102.5 203.5 L1105.5 207 L1110.5 199.5" stroke="#4a4a4a" stroke-width="1.2" fill="none"/>
<path d="M1102.5 225.5 L1105.5 229 L1110.5 221.5" stroke="#4a4a4a" stroke-width="1.2" fill="none"/>
<path d="M1102.5 247.5 L1105.5 251 L1110.5 243.5" stroke="#4a4a4a" stroke-width="1.2" fill="none"/>
<path d="M1102.5 347.5 L1105.5 351 L1110.5 343.5" stroke="#4a4a4a" stroke-width="1.2" fill="none"/>
<path d="M1102.5 369.5 L1105.5 373 L1110.5 365.5" stroke="#4a4a4a" stroke-width="1.2" fill="none"/>
<path d="M1102.5 391.5 L1105.5 395 L1110.5 387.5" stroke="#4a4a4a" stroke-width="1.2" fill="none"/>
<path d="M1102.5 413.5 L1105.5 417 L1110.5 409.5" stroke="#4a4a4a" stroke-width="1.2" fill="none"/>
<text x="1152.7" y="141.2" font-size="10.8" fill="#161616" font-family="Liberation Sans" textLength="60.5" lengthAdjust="spacingAndGlyphs">shoulderJC</text>
<text x="1159.5" y="163.2" font-size="10.8" fill="#161616" font-family="Liberation Sans" textLength="45.9" lengthAdjust="spacingAndGlyphs">elbowJC</text>
<text x="1154.2" y="185.2" font-size="10.8" fill="#161616" font-family="Liberation Sans" textLength="54.6" lengthAdjust="spacingAndGlyphs">ocprocess</text>
<text x="1166.8" y="206.8" font-size="10.8" fill="#161616" font-family="Liberation Sans" textLength="25.1" lengthAdjust="spacingAndGlyphs">wrist</text>
<text x="1158.9" y="228.8" font-size="10.8" fill="#161616" font-family="Liberation Sans" textLength="40.6" lengthAdjust="spacingAndGlyphs">knuckle</text>
<text x="1169.9" y="250.7" font-size="10.8" fill="#161616" font-family="Liberation Sans" textLength="19.6" lengthAdjust="spacingAndGlyphs">ball</text>
<text x="1153.2" y="351.5" font-size="10.8" fill="#161616" font-family="Liberation Sans" textLength="52.6" lengthAdjust="spacingAndGlyphs">upperArm</text>
<text x="1154.9" y="373.5" font-size="10.8" fill="#161616" font-family="Liberation Sans" textLength="50.6" lengthAdjust="spacingAndGlyphs">oc2elbow</text>
<text x="1158.3" y="395.5" font-size="10.8" fill="#161616" font-family="Liberation Sans" textLength="42.6" lengthAdjust="spacingAndGlyphs">foreArm</text>
<text x="1165.8" y="417.5" font-size="10.8" fill="#161616" font-family="Liberation Sans" textLength="27.7" lengthAdjust="spacingAndGlyphs">hand</text>
<text x="1158.9" y="561.6" font-size="10.8" fill="#161616" font-family="Liberation Sans" textLength="39.9" lengthAdjust="spacingAndGlyphs">arm2oc</text>
</svg>
<svg width="1200" height="680" viewBox="0 0 1200 680" style="z-index:50">
<text x="8.00" y="17.50" font-size="13.8" font-weight="normal" fill="#161616" textLength="22.05" lengthAdjust="spacingAndGlyphs">File</text>
<text x="48.00" y="17.50" font-size="13.8" font-weight="normal" fill="#161616" textLength="27.04" lengthAdjust="spacingAndGlyphs">Edit</text>
<text x="94.00" y="17.50" font-size="13.8" font-weight="normal" fill="#161616" textLength="31.00" lengthAdjust="spacingAndGlyphs">View</text>
<text x="144.00" y="17.50" font-size="13.8" font-weight="normal" fill="#161616" textLength="47.02" lengthAdjust="spacingAndGlyphs">History</text>
<text x="210.00" y="17.50" font-size="13.8" font-weight="normal" fill="#161616" textLength="72.01" lengthAdjust="spacingAndGlyphs">Bookmarks</text>
<text x="301.00" y="17.50" font-size="13.8" font-weight="normal" fill="#161616" textLength="31.00" lengthAdjust="spacingAndGlyphs">Tools</text>
<text x="350.00" y="17.50" font-size="13.8" font-weight="normal" fill="#161616" textLength="30.04" lengthAdjust="spacingAndGlyphs">Help</text>
<text x="27.70" y="54.50" font-size="13.8" font-weight="normal" fill="#161616" textLength="60.03" lengthAdjust="spacingAndGlyphs">2D Video</text>
<text x="122.00" y="54.70" font-size="13.8" font-weight="normal" fill="#161616" textLength="98.01" lengthAdjust="spacingAndGlyphs">Image Analysis</text>
<text x="256.00" y="55.00" font-size="13.8" font-weight="normal" fill="#161616" textLength="51.00" lengthAdjust="spacingAndGlyphs">Analysis</text>
<text x="342.00" y="55.00" font-size="13.8" font-weight="normal" fill="#161616" textLength="39.03" lengthAdjust="spacingAndGlyphs">Setup</text>
<text x="419.00" y="55.00" font-size="13.8" font-weight="normal" fill="#161616" textLength="53.00" lengthAdjust="spacingAndGlyphs">Tutorials</text>
<text x="509.00" y="55.00" font-size="13.8" font-weight="normal" fill="#161616" textLength="30.04" lengthAdjust="spacingAndGlyphs">Labs</text>
<text x="586.00" y="55.00" font-size="13.8" font-weight="normal" fill="#161616" textLength="45.60" lengthAdjust="spacingAndGlyphs">Reload</text>
<text x="19.70" y="98.30" font-size="13.8" font-weight="normal" fill="#161616" textLength="31.67" lengthAdjust="spacingAndGlyphs">Main</text>
<text x="64.70" y="98.80" font-size="13.8" font-weight="normal" fill="#161616" textLength="37.25" lengthAdjust="spacingAndGlyphs">Video</text>
<text x="115.50" y="98.80" font-size="13.8" font-weight="normal" fill="#161616" textLength="46.29" lengthAdjust="spacingAndGlyphs">Graphs</text>
<text x="175.70" y="98.80" font-size="13.8" font-weight="normal" fill="#161616" textLength="52.39" lengthAdjust="spacingAndGlyphs">Multiple</text>
<text x="243.00" y="98.80" font-size="13.8" font-weight="normal" fill="#161616" textLength="52.55" lengthAdjust="spacingAndGlyphs">Reports</text>
<text x="1061.00" y="92.00" font-size="13.8" font-weight="normal" fill="#161616" textLength="132.01" lengthAdjust="spacingAndGlyphs">ballTossB240fps.ogv</text>
<text x="50.50" y="149.70" font-size="13.8" font-weight="normal" fill="#161616" textLength="45.72" lengthAdjust="spacingAndGlyphs">Viewer</text>
<text x="76.50" y="174.50" font-size="13.8" font-weight="normal" fill="#161616" textLength="53.77" lengthAdjust="spacingAndGlyphs">Go back</text>
<text x="76.00" y="203.60" font-size="13.8" font-weight="normal" fill="#161616" textLength="87.01" lengthAdjust="spacingAndGlyphs">Save Project</text>
<text x="78.50" y="232.70" font-size="13.8" font-weight="normal" fill="#161616" textLength="73.51" lengthAdjust="spacingAndGlyphs">Toggle Help</text>
<text x="224.00" y="180.30" font-size="13.8" font-weight="normal" fill="#161616" textLength="129.72" lengthAdjust="spacingAndGlyphs">Display Time: 8.609</text>
<text x="594.00" y="139.00" font-size="13.8" font-weight="normal" fill="#161616" textLength="74.74" lengthAdjust="spacingAndGlyphs">Frame: 258</text>
<text x="722.80" y="139.00" font-size="13.8" font-weight="normal" fill="#161616" textLength="68.87" lengthAdjust="spacingAndGlyphs">Start: 178</text>
<text x="723.50" y="153.60" font-size="13.8" font-weight="normal" fill="#161616" textLength="59.07" lengthAdjust="spacingAndGlyphs">End: 268</text>
<text x="723.00" y="168.00" font-size="13.8" font-weight="normal" fill="#161616" textLength="57.02" lengthAdjust="spacingAndGlyphs">Synch: 0</text>
<text x="50.40" y="282.90" font-size="13.8" font-weight="bold" fill="#161616" textLength="43.21" lengthAdjust="spacingAndGlyphs">Show:</text>
<text x="50.30" y="540.70" font-size="13.8" font-weight="bold" fill="#161616" textLength="92.73" lengthAdjust="spacingAndGlyphs">Click Object:</text>
<text x="1084.40" y="120.60" font-size="13.8" font-weight="bold" fill="#161616" textLength="59.63" lengthAdjust="spacingAndGlyphs">Markers</text>
<text x="1084.70" y="331.40" font-size="13.8" font-weight="bold" fill="#161616" textLength="37.67" lengthAdjust="spacingAndGlyphs">Links</text>
<text x="1084.70" y="541.30" font-size="13.8" font-weight="bold" fill="#161616" textLength="49.37" lengthAdjust="spacingAndGlyphs">Angles</text>
<text x="68.00" y="310.00" font-size="12.6" font-weight="normal" fill="#161616" textLength="56.00" lengthAdjust="spacingAndGlyphs">Veloc. Vec</text>
<text x="68.00" y="333.75" font-size="12.6" font-weight="normal" fill="#161616" textLength="56.00" lengthAdjust="spacingAndGlyphs">Accel. Vec</text>
<text x="67.80" y="358.00" font-size="12.6" font-weight="normal" fill="#161616" textLength="72.21" lengthAdjust="spacingAndGlyphs">Marker Paths</text>
<text x="67.00" y="382.00" font-size="12.6" font-weight="normal" fill="#161616" textLength="58.02" lengthAdjust="spacingAndGlyphs">Link Paths</text>
<text x="67.00" y="405.40" font-size="12.6" font-weight="normal" fill="#161616" textLength="61.02" lengthAdjust="spacingAndGlyphs">Fade paths</text>
<text x="123.40" y="427.50" font-size="13.8" font-weight="normal" fill="#161616" textLength="45.64" lengthAdjust="spacingAndGlyphs">Skip by</text>
<text x="86.00" y="433.40" font-size="13.8" font-weight="normal" fill="#161616" textLength="9.02" lengthAdjust="spacingAndGlyphs">3</text>
<text x="77.50" y="481.60" font-size="13.8" font-weight="normal" fill="#161616" textLength="53.91" lengthAdjust="spacingAndGlyphs">Add Link</text>
<text x="77.50" y="510.40" font-size="13.8" font-weight="normal" fill="#161616" textLength="65.56" lengthAdjust="spacingAndGlyphs">Add Angle</text>
<text x="82.80" y="562.30" font-size="11" font-weight="normal" fill="#161616" textLength="44.74" lengthAdjust="spacingAndGlyphs">To edit it</text>
<text x="83.00" y="585.20" font-size="11" font-weight="normal" fill="#161616" textLength="56.22" lengthAdjust="spacingAndGlyphs">To delete it</text>
</svg>
</body></html>
